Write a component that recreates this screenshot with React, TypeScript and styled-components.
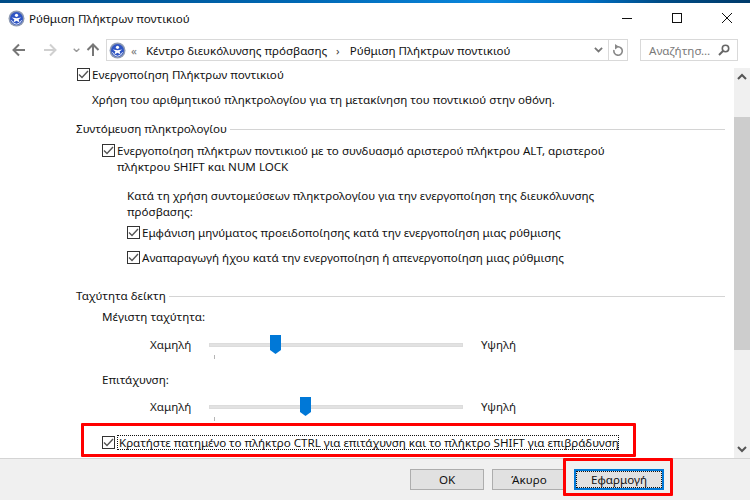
import React from "react";
import styled, { createGlobalStyle } from "styled-components";

const Global = createGlobalStyle`
  html, body { margin: 0; padding: 0; background: #fff; }
  body { font-family: "Noto Sans", "Open Sans", sans-serif; font-size: 11.6px; color: #1a1a1a; }
  * { box-sizing: border-box; }
`;

const Win = styled.div`
  position: relative; width: 750px; height: 500px; overflow: hidden;
  display: flex; flex-direction: column; background: #fff;
`;
const Accent = styled.div`
  height: 3px; flex: none;
  background: linear-gradient(90deg, #004c87 0%, #0068b4 40%, #0a86dc 65%, #0070c4 78%, #004c87 88%, #003b6b 100%);
`;
const TitleBar = styled.div`
  height: 30px; flex: none; display: flex; align-items: center; padding-left: 8px; gap: 4px;
`;
const TitleText = styled.span`
  flex: 1; color: #111;
`;
const WinBtn = styled.div`
  width: 46px; height: 30px; display: flex; align-items: center; justify-content: center; flex: none;
`;
const NavBar = styled.div`
  height: 28px; margin-top: 3px; flex: none; display: flex; align-items: center; padding: 0 12px;
`;
const NavIcon = styled.div<{ $w: number; $ml?: number }>`
  width: ${(p) => p.$w}px; height: 20px; margin-left: ${(p) => p.$ml ?? 0}px;
  display: flex; align-items: center; justify-content: center; flex: none;
`;
const AddressBox = styled.div`
  margin-left: 6px; width: 522px; height: 22px; flex: none; border: 1px solid #d9d9d9;
  display: flex; align-items: center; padding-left: 2px; gap: 5px;
`;
const Crumbs = styled.span`
  flex: 1; white-space: pre; color: #111;
`;
const Chev = styled.span`color: #777; margin-right: 6px;`;
const Sep = styled.span`margin: 0 10px 0 9px; color: #444;`;
const AddrBtn = styled.div`
  width: 19px; height: 20px; flex: none; display: flex; align-items: center; justify-content: center;
  border-left: 1px solid #d9d9d9;
`;
const SearchBox = styled.div`
  margin-left: 12px; width: 98px; height: 22px; flex: none; border: 1px solid #d9d9d9;
  display: flex; align-items: center; justify-content: space-between; padding: 0 7px 0 8px; color: #7a7a7a;
`;
const Body = styled.div`
  flex: 1; display: flex; min-height: 0; padding-top: 3px;
`;
const Content = styled.div`
  flex: 1; padding: 0 0 0 76px; display: flex; flex-direction: column; min-width: 0;
`;
const Row = styled.label<{ $indent?: number; $mt?: number }>`
  display: flex; align-items: flex-start; gap: 2px;
  margin-left: ${(p) => p.$indent ?? 0}px; margin-top: ${(p) => p.$mt ?? 0}px;
  line-height: 16px; white-space: pre-line; color: #111;
`;
const Box = styled.span`
  width: 13px; height: 13px; flex: none; border: 1px solid #333; background: #fff;
  display: flex; align-items: center; justify-content: center; margin-top: 1px;
`;
const Para = styled.div<{ $indent?: number; $mt?: number }>`
  margin-left: ${(p) => p.$indent ?? 0}px; margin-top: ${(p) => p.$mt ?? 0}px;
  line-height: 16px; white-space: pre-line; color: #111;
`;
const Section = styled.div<{ $mt: number }>`
  display: flex; align-items: center; gap: 3px; margin-top: ${(p) => p.$mt}px; line-height: 16px; color: #111;
  width: 649px;
  &::after { content: ""; flex: 1; height: 1px; background: #d4d4d4; }
`;
const SliderRow = styled.div<{ $mt: number }>`
  display: flex; align-items: center; margin-top: ${(p) => p.$mt}px; margin-left: 74px; height: 20px;
`;
const SliderLabel = styled.span`
  width: 59px; flex: none; line-height: 16px;
`;
const Track = styled.div`
  position: relative; width: 254px; height: 4px; flex: none; background: #e2e2e2; border: 1px solid #dcdcdc;
`;
const Thumb = styled.svg<{ $x: number }>`
  position: absolute; left: ${(p) => p.$x}px; top: -9px;
`;
const Tick = styled.span`
  position: absolute; left: 4px; top: 11px; width: 1px; height: 4px; background: #b5b5b5;
`;
const SliderEnd = styled.span`margin-left: 18px; line-height: 16px;`;
const Focus = styled.span`
  display: block; width: 502px; height: 15px; border: 1px dotted #111; line-height: 13px; white-space: nowrap;
  padding-left: 1px; letter-spacing: -0.03px;
`;
const Scrollbar = styled.div`
  width: 16px; flex: none; margin-top: 1px; background: #f0f0f0; display: flex; flex-direction: column; align-items: center;
`;
const ScrollArrow = styled.div`
  height: 17px; flex: none; display: flex; align-items: center; justify-content: center;
`;
const ScrollTrack = styled.div`flex: 1; width: 100%; padding-top: 32px; padding-bottom: 91px; display: flex;`;
const ScrollThumb = styled.div`flex: 1; background: #cdcdcd;`;
const Footer = styled.div`
  height: 42px; flex: none; background: #f0f0f0; border-top: 1px solid #d4d4d4;
  display: flex; justify-content: flex-end; align-items: center; gap: 8px; padding-right: 86px;
`;
const Btn = styled.div<{ $active?: boolean }>`
  position: relative; width: ${(p) => (p.$active ? 90 : 74)}px; height: 21px; background: #e1e1e1;
  border: ${(p) => (p.$active ? "2px solid #0078d7" : "1px solid #adadad")};
  display: flex; align-items: center; justify-content: center; color: #111;
  ${(p) => p.$active && `&::after { content: ""; position: absolute; inset: 0; border: 1px dotted #111; }`}
`;
const RedRect = styled.div<{ $x: number; $y: number; $w: number; $h: number }>`
  position: absolute; left: ${(p) => p.$x}px; top: ${(p) => p.$y}px; width: ${(p) => p.$w}px; height: ${(p) => p.$h}px;
  border: 3px solid #f00; border-radius: 1px; pointer-events: none;
`;

const Globe = () => (
  <svg width="17" height="17" viewBox="0 0 17 17">
    <circle cx="8.5" cy="8.5" r="8" fill="#8f9bb3" />
    <circle cx="8.5" cy="8.5" r="6.5" fill="#2f55c4" />
    <circle cx="8.5" cy="5.3" r="1.6" fill="#fff" />
    <path d="M3.8 7.4 L8.5 8.2 L13.2 7.4 L10.6 9.6 L11.6 12.6 L8.5 10.8 L5.4 12.6 L6.4 9.6 Z" fill="#fff" />
    <path d="M3.4 10.2 Q5 14 8.5 14.2 Q12 14 13.6 10.2" fill="none" stroke="#dfe6f7" strokeWidth="1" />
  </svg>
);
const Check = () => (
  <svg width="11" height="11" viewBox="0 0 11 11">
    <path d="M1 5.5 L4 8.5 L10 2" fill="none" stroke="#555" strokeWidth="1.4" />
  </svg>
);
const ArrowIcon = styled.svg<{ $rot: number }>`
  transform: rotate(${(p) => p.$rot}deg);
`;
const Arrow = ({ dir, color }: { dir: "l" | "r" | "u"; color: string }) => (
  <ArrowIcon $rot={dir === "l" ? 0 : dir === "r" ? 180 : 90} width="14" height="14" viewBox="0 0 14 14">
    <path d="M1.5 7 H13 M7 1.5 L1.5 7 L7 12.5" fill="none" stroke={color} strokeWidth="2" />
  </ArrowIcon>
);
const Caret = ({ up, size = 8, color = "#777" }: { up?: boolean; size?: number; color?: string }) => (
  <svg width={size} height={size * 0.7} viewBox="0 0 10 7">
    <path d={up ? "M1 6 L5 2 L9 6" : "M1 1 L5 5 L9 1"} fill="none" stroke={color} strokeWidth="2" />
  </svg>
);
const SliderThumb = ({ x }: { x: number }) => (
  <Thumb $x={x} width="11" height="19" viewBox="0 0 11 19">
    <path d="M0 0 H11 V15 L5.5 19 L0 15 Z" fill="#0078d7" />
  </Thumb>
);

export default function App() {
  return (
    <Win>
      <Global />
      <Accent />
      <TitleBar>
        <Globe />
        <TitleText>Ρύθμιση Πλήκτρων ποντικιού</TitleText>
        <WinBtn>
          <svg width="10" height="10" viewBox="0 0 10 10"><path d="M0 5.5 H10" stroke="#111" /></svg>
        </WinBtn>
        <WinBtn>
          <svg width="10" height="10" viewBox="0 0 10 10"><rect x=".5" y=".5" width="9" height="9" fill="none" stroke="#111" /></svg>
        </WinBtn>
        <WinBtn>
          <svg width="10" height="10" viewBox="0 0 10 10"><path d="M0 0 L10 10 M10 0 L0 10" stroke="#111" /></svg>
        </WinBtn>
      </TitleBar>
      <NavBar>
        <NavIcon $w={14}><Arrow dir="l" color="#777" /></NavIcon>
        <NavIcon $w={16} $ml={16}><Arrow dir="r" color="#d0d0d0" /></NavIcon>
        <NavIcon $w={12} $ml={12}><Caret size={7} color="#999" /></NavIcon>
        <NavIcon $w={14} $ml={4}><Arrow dir="u" color="#777" /></NavIcon>
        <AddressBox>
          <Globe />
          <Crumbs><Chev>«</Chev> Κέντρο διευκόλυνσης πρόσβασης<Sep>›</Sep>Ρύθμιση Πλήκτρων ποντικιού</Crumbs>
          <Caret size={9} />
          <AddrBtn>
            <svg width="12" height="12" viewBox="0 0 12 12">
              <path d="M6 2.8 A4.2 4.2 0 1 1 2 6" fill="none" stroke="#888" strokeWidth="1.6" />
              <path d="M7 2.8 L3 0 V5.5 Z" fill="#888" />
            </svg>
          </AddrBtn>
        </AddressBox>
        <SearchBox>
          <span>Αναζήτησ…</span>
          <svg width="12" height="12" viewBox="0 0 12 12">
            <circle cx="7.5" cy="4.5" r="3.2" fill="none" stroke="#666" strokeWidth="1.6" />
            <path d="M5 7 L1 11" stroke="#666" strokeWidth="2" />
          </svg>
        </SearchBox>
      </NavBar>
      <Body>
        <Content>
          <Row $indent={1}><Box><Check /></Box>Ενεργοποίηση Πλήκτρων ποντικιού</Row>
          <Para $indent={16} $mt={9}>Χρήση του αριθμητικού πληκτρολογίου για τη μετακίνηση του ποντικιού στην οθόνη.</Para>
          <Section $mt={13}>Συντόμευση πληκτρολογίου</Section>
          <Row $indent={26} $mt={6}>
            <Box><Check /></Box>{"Ενεργοποίηση πλήκτρων ποντικιού με το συνδυασμό αριστερού πλήκτρου ALT, αριστερού\nπλήκτρου SHIFT και NUM LOCK"}
          </Row>
          <Para $indent={51} $mt={13}>{"Κατά τη χρήση συντομεύσεων πληκτρολογίου για την ενεργοποίηση της διευκόλυνσης\nπρόσβασης:"}</Para>
          <Row $indent={51} $mt={5}><Box><Check /></Box>Εμφάνιση μηνύματος προειδοποίησης κατά την ενεργοποίηση μιας ρύθμισης</Row>
          <Row $indent={51} $mt={9}><Box><Check /></Box>Αναπαραγωγή ήχου κατά την ενεργοποίηση ή απενεργοποίηση μιας ρύθμισης</Row>
          <Section $mt={22}>Ταχύτητα δείκτη</Section>
          <Para $indent={26} $mt={5}>Μέγιστη ταχύτητα:</Para>
          <SliderRow $mt={10}>
            <SliderLabel>Χαμηλή</SliderLabel>
            <Track><SliderThumb x={60} /><Tick /></Track>
            <SliderEnd>Υψηλή</SliderEnd>
          </SliderRow>
          <Para $indent={26} $mt={17}>Επιτάχυνση:</Para>
          <SliderRow $mt={9}>
            <SliderLabel>Χαμηλή</SliderLabel>
            <Track><SliderThumb x={90} /><Tick /></Track>
            <SliderEnd>Υψηλή</SliderEnd>
          </SliderRow>
          <Row $indent={26} $mt={18}>
            <Box><Check /></Box>
            <Focus>Κρατήστε πατημένο το πλήκτρο CTRL για επιτάχυνση και το πλήκτρο SHIFT για επιβράδυνση</Focus>
          </Row>
        </Content>
        <Scrollbar>
          <ScrollArrow><Caret up size={10} color="#555" /></ScrollArrow>
          <ScrollTrack><ScrollThumb /></ScrollTrack>
          <ScrollArrow><Caret size={10} color="#555" /></ScrollArrow>
        </Scrollbar>
      </Body>
      <Footer>
        <Btn>OK</Btn>
        <Btn>Άκυρο</Btn>
        <Btn $active>Εφαρμογή</Btn>
      </Footer>
      <RedRect $x={81} $y={423} $w={555} $h={34} />
      <RedRect $x={563} $y={458} $w={110} $h={38} />
    </Win>
  );
}
